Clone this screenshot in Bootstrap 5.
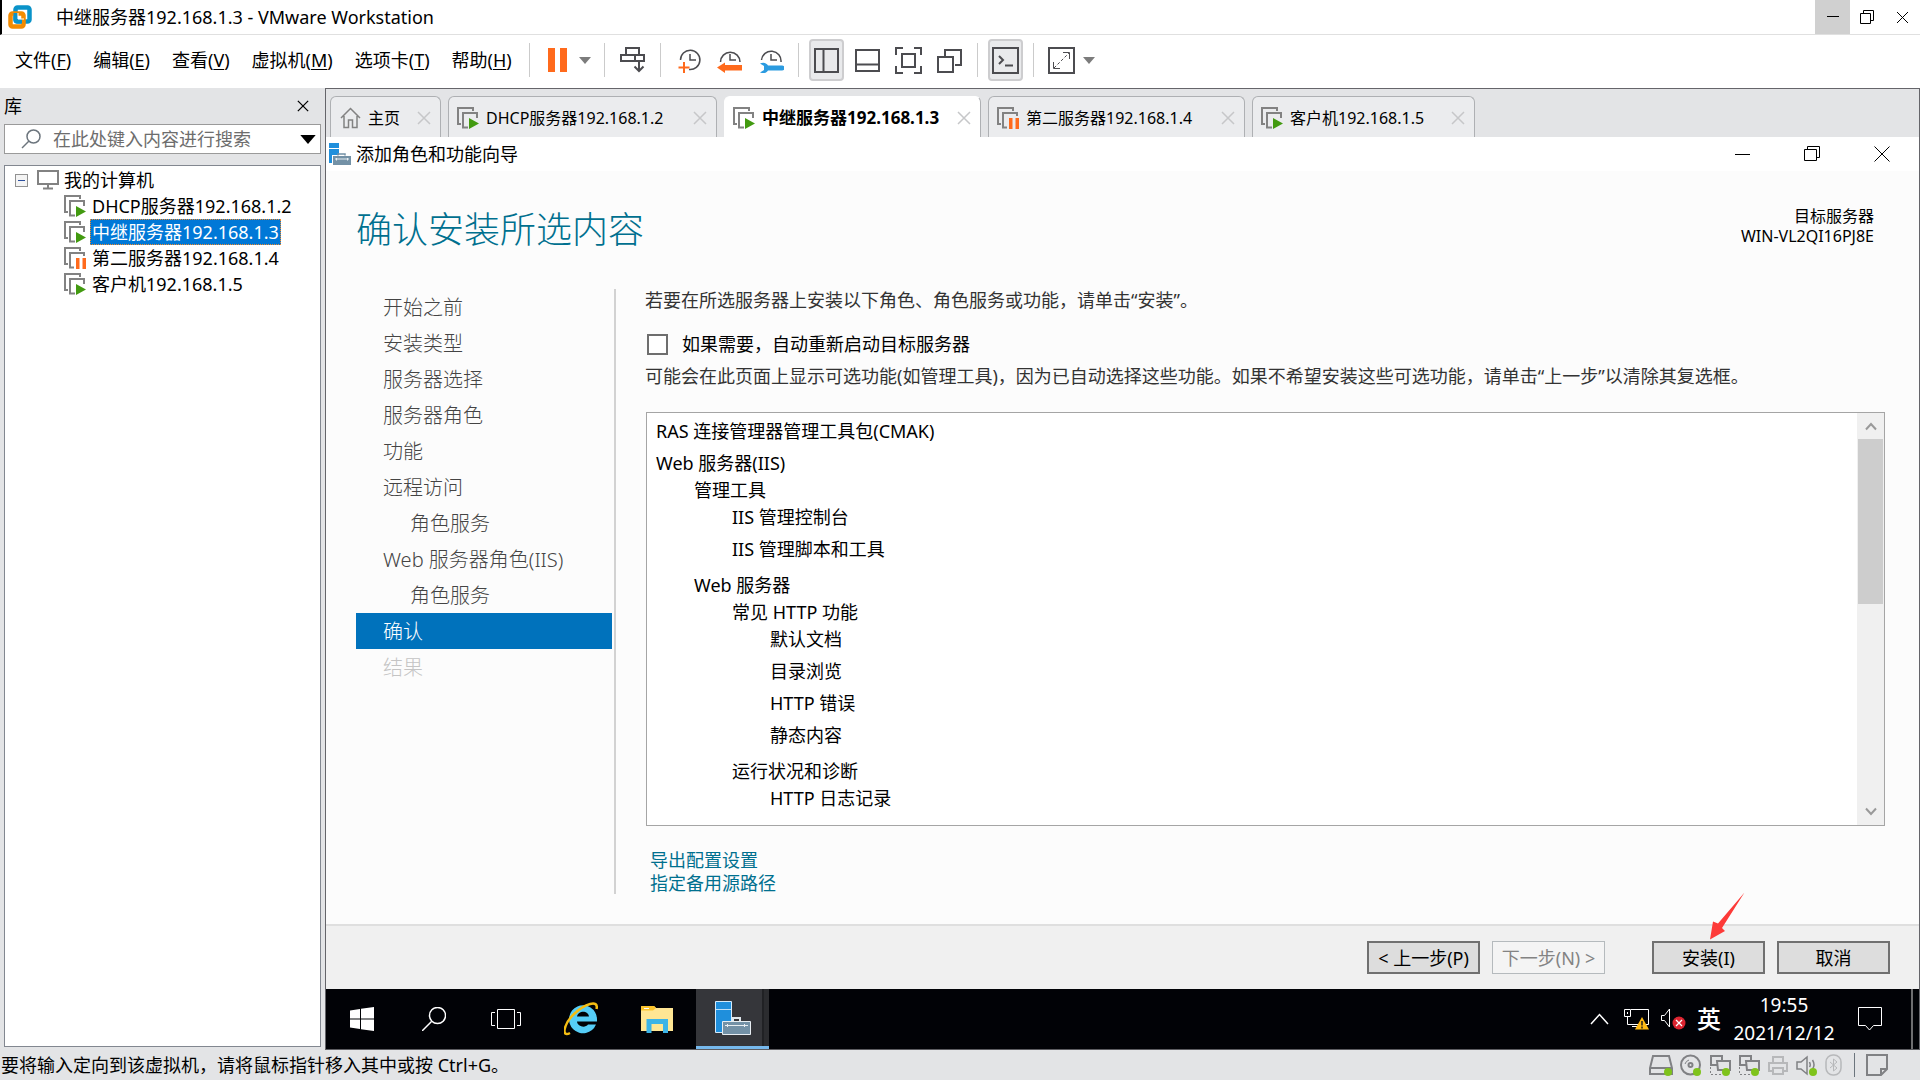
<!DOCTYPE html>
<html lang="zh-CN">
<head>
<meta charset="utf-8">
<meta name="viewport" content="width=device-width, initial-scale=1">
<title>中继服务器192.168.1.3 - VMware Workstation</title>
<link href="https://cdn.jsdelivr.net/npm/bootstrap@5.3.0/dist/css/bootstrap.min.css" rel="stylesheet">
<style>
  body { font-family: "Noto Sans", "Noto Sans CJK SC", sans-serif; font-size: 18px; line-height: 26px; color: #000; background: #e3e4e6; }
  button, input { font: inherit; color: inherit; }
  button { padding: 0; border: 0; background: transparent; }
  svg { display: block; flex: none; }
  .ln { fill: none; stroke: currentColor; stroke-width: 2; }
  .hair { fill: none; stroke: currentColor; stroke-width: 1; }
  .fine { stroke-width: 1.5; }

  .app-title { height: 35px; background: #fff; border-bottom: 1px solid #e0e0e0; border-left: 2px solid #000; }
  .win-btn { width: 35px; }
  .win-btn.hovered { background: #d0d0d0; }

  .app-bar { height: 53px; padding-bottom: 3px; background: #fff; }
  .menu-link { color: #000; text-decoration: none; }
  .menu-link u { text-underline-offset: 2px; }
  .menus { gap: 22px; width: 513px; padding-left: 15px; }
  .tools { gap: 6px; color: #4c4c50; }
  .tool-sep { width: 1px; height: 34px; margin: 0 4px; background: #cbcbcb; }
  .tool { width: 35px; height: 42px; display: flex; align-items: center; justify-content: center; border-radius: 4px; }
  .tool.pressed { background: #e9eaec; border: 2px solid #cdcdcf; }
  .tool-caret { width: 19px; color: #7c7c7c; display: flex; justify-content: center; }

  .library { width: 325px; flex: none; padding: 0 4px 3px; }
  .lib-head { height: 36px; }
  .search-box { height: 30px; background: #fff; border: 1px solid #9a9a9a; }
  .search-box input { border: 0; outline: 0; background: none; min-width: 0; }
  .search-box input::placeholder { color: #6d6d6d; opacity: 1; }
  .tree { margin-top: 11px; padding: 1px 0 0 10px; background: #fff; border: 1px solid #828790; }
  .tree-row { height: 26px; }
  .tree-kids { padding-left: 49px; }
  .tree-name { line-height: 24px; padding: 0 1px; border: 1px solid transparent; }
  .tree-name.chosen { background: #0078d7; color: #fff; border: 1px dotted #f28b2a; }
  .expander { width: 13px; height: 13px; border: 1px solid #919191; background: #f4f4f4; }
  .vm-ico { color: #828282; }

  .stage { border: 1px solid #65656a; border-bottom-color: #5c5c60; }
  .tabs { height: 48px; gap: 7px; padding: 7px 4px 0; background: #e3e4e6; }
  .vm-tab { display: flex; align-items: center; gap: 7px; background: #ebecee; border: 1px solid #aeb0b3; border-bottom: 0; border-radius: 6px 6px 0 0; font-size: 16px; padding: 1px 9px 0 8px; color: #000; }
  .vm-tab.current { background: #fff; border-left-color: #fff; border-top-color: #fff; font-size: 17px; font-weight: 700; }
  .tab-s { width: 111px; } .tab-m { width: 223px; } .tab-l { width: 257px; } .tab-xl { width: 269px; }
  .shut { color: #c6c7c9; }

  .wiz-title { height: 34px; background: #fff; padding-right: 2px; }
  .wiz-ctl { width: 70px; display: flex; justify-content: center; }
  .wizard { background: #fcfcfc; }
  .wiz-head { height: 118px; padding: 0 45px 0 30px; }
  .wiz-head h1 { margin: 35px 0 0; font-size: 36px; line-height: 42px; font-weight: 300; color: #00708f; font-family: "Noto Sans CJK SC Light", "Noto Sans CJK SC", sans-serif; }
  .target { margin-top: 35px; font-size: 16px; line-height: 20px; text-align: right; }
  .steps { width: 260px; flex: none; margin: 0 0 30px 30px; padding: 0 2px 0 0; border-right: 2px solid #d2d2d2; }
  .step { display: block; height: 36px; line-height: 38px; padding-left: 27px; font-size: 20px; font-weight: 300; color: #444; text-decoration: none; }
  .step.sub { padding-left: 54px; }
  .step.now { background: #0072bc; color: #fff; }
  .step.off { color: #c4c4c4; }
  .pane { padding: 0 34px 0 29px; color: #333; }
  .intro { line-height: 22px; }
  .restart { gap: 14px; margin: 20px 0 6px; color: #000; }
  .restart input { appearance: none; width: 21px; height: 21px; margin: 0 0 0 2px; border: 2px solid #6e6e6e; background: #fff; }
  .role-box { margin: 23px 0 23px 1px; height: 414px; background: #fff; border: 1px solid #a5a5a5; color: #000; }
  .role-list { padding: 5px 0 0 9px; line-height: 27px; }
  .role-list ul { list-style: none; margin: 0 0 4px; padding: 0 0 0 38px; }
  .role-list > ul { padding: 0; }
  .leaf { padding-bottom: 5px; }
  .scroller { width: 27px; background: #f0f0f0; color: #999; border: 1px solid #f0f0f0; }
  .scroller button { height: 25px; display: flex; align-items: center; justify-content: center; }
  .thumb { height: 165px; background: #cdcdcd; }
  .links { padding-left: 5px; }
  .wiz-link { color: #00708f; text-decoration: none; line-height: 23px; }
  .wiz-foot { height: 65px; background: #f0f0f0; border-top: 2px solid #dfdfdf; padding-right: 29px; gap: 12px; }
  .wbtn { width: 113px; height: 33px; line-height: 28px; white-space: nowrap; background: #ddd; border: 2px solid #707070; }
  .wbtn:disabled { background: #f4f4f4; border: 1px solid #b5babd; color: #838383; }
  .commit { margin-left: 35px; }
  .pointer-arrow { position: absolute; left: 57px; top: -49px; }

  .taskbar { height: 60px; background: #010206; color: #fff; }
  .task { width: 72px; display: flex; align-items: center; justify-content: center; }
  .task.pinned { width: 77px; }
  .task.open { width: 73px; background: linear-gradient(90deg, #35363a 66px, #202124 66px, #202124 68px, #2b2c2f 68px); border-bottom: 3px solid #76b9ed; }
  .clock { font-size: 19px; line-height: 28px; width: 104px; }
  .ime { font-size: 24px; line-height: 30px; font-weight: 500; }
  .peek { width: 8px; border-left: 2px solid #6e6e70; }
  .tray { gap: 11px; }

  .status { height: 30px; padding-left: 1px; color: #000; }
  .devices { gap: 7px; color: #808184; padding-right: 32px; }
  .dim { color: #b7b8ba; }
</style>
</head>
<body class="d-flex flex-column vh-100 overflow-hidden">

<svg width="0" height="0" class="position-absolute" aria-hidden="true">
  <symbol id="vm-run" viewBox="0 0 22 22">
    <path d="M4 17H1V1h15v3" fill="none" stroke="#828282" stroke-width="2"/>
    <path d="M11 20.500H6V6h14v5" fill="none" stroke="#828282" stroke-width="2"/>
    <path d="M12 11l10 5.500L12 22z" fill="#429a10"/>
  </symbol>
  <symbol id="vm-hold" viewBox="0 0 22 22">
    <path d="M4 17H1V1h15v3" fill="none" stroke="#828282" stroke-width="2"/>
    <path d="M10 20.500H6V6h14v3" fill="none" stroke="#828282" stroke-width="2"/>
    <path d="M12 11h3.500v11H12zM18.500 11H22v11h-3.500z" fill="#ff6a1c"/>
  </symbol>
  <symbol id="cross" viewBox="0 0 14 14"><path d="M1 1l12 12M13 1L1 13" fill="none" stroke="currentColor" stroke-width="1.500"/></symbol>
  <symbol id="srv-mgr" viewBox="0 0 36 34">
    <path d="M.5.500h16v31H.500z" fill="#1f8fdc" stroke="#d5ebfa"/><path d="M1 8.500h15" stroke="#bfe0f7"/>
    <path d="M18 20v-3h7v3" fill="none" stroke="#dfe7ec" stroke-width="2"/>
    <path d="M7.500 20.500h28v13h-28z" fill="#7391a6" stroke="#e8eef2"/>
    <path d="M10 24.500h23M12.500 23v3M29.500 23v3" stroke="#e8eef2" fill="none"/>
  </symbol>
  <symbol id="down" viewBox="0 0 12 7"><path d="M0 0h12L6 7z" fill="currentColor"/></symbol>
</svg>

<header class="app-title d-flex align-items-center">
  <svg class="ms-1 me-4" width="26" height="24" viewBox="-2 0 26 24"><rect x="7.500" y="2.500" width="14" height="14" rx="2" fill="none" stroke="#0a93c9" stroke-width="4.500"/><rect x="2.500" y="8.500" width="13" height="13" rx="2" fill="none" stroke="#f38b00" stroke-width="4.500"/><path d="M7.500 8v7a1.500 1.500 0 0 0 1.500 1.500h5" fill="none" stroke="#0a93c9" stroke-width="4"/><path d="M10 8v6h6" fill="none" stroke="#fff"/></svg>
  <span class="me-auto">中继服务器192.168.1.3 - VMware Workstation</span>
  <div class="d-flex align-self-stretch">
    <button class="win-btn hovered d-flex align-items-center justify-content-center" aria-label="最小化"><svg width="12" height="12"><path d="M0 5.500h12" class="hair"/></svg></button>
    <button class="win-btn d-flex align-items-center justify-content-center" aria-label="还原"><svg width="15" height="15"><path d="M3.500 3.500v-3h10v10h-3M.5 3.500h10v10H.5z" class="hair"/></svg></button>
    <button class="win-btn d-flex align-items-center justify-content-center" aria-label="关闭"><svg width="13" height="13"><path d="M1 1l11 11M12 1L1 12" class="hair"/></svg></button>
  </div>
</header>

<div class="app-bar d-flex align-items-center">
  <nav class="menus d-flex text-nowrap">
    <a class="menu-link" href="#">文件(<u>F</u>)</a>
    <a class="menu-link" href="#">编辑(<u>E</u>)</a>
    <a class="menu-link" href="#">查看(<u>V</u>)</a>
    <a class="menu-link" href="#">虚拟机(<u>M</u>)</a>
    <a class="menu-link" href="#">选项卡(<u>T</u>)</a>
    <a class="menu-link" href="#">帮助(<u>H</u>)</a>
  </nav>
  <div class="tools d-flex align-items-center ms-2">
    <span class="tool-sep ms-2"></span>
    <div class="d-flex align-items-center">
      <button class="tool" aria-label="挂起"><svg width="19" height="24"><path d="M0 0h7v24H0zM12 0h7v24h-7z" fill="#ff6a1c"/></svg></button>
      <button class="tool-caret" aria-label="电源选项"><svg width="12" height="7"><use href="#down"/></svg></button>
    </div>
    <span class="tool-sep"></span>
    <button class="tool" aria-label="发送 Ctrl+Alt+Del"><svg width="26" height="26" viewBox="0 0 26 26"><path class="ln" d="M6 1h13v7H6zM1 8h14v6H1zM15 8h9v6h-9z"/><path class="ln" d="M19 14v10M14.500 19.500l4.500 4.500 4.500-4.500" /></svg></button>
    <span class="tool-sep"></span>
    <button class="tool" aria-label="拍摄快照"><svg width="26" height="26" viewBox="0 0 26 26"><path class="ln fine" d="M4.500 13A9.700 9.700 0 1 1 13 22.500M14 7v6h6"/><path d="M8 15v11M2.500 20.500h11" stroke="#ff6a1c" stroke-width="2"/></svg></button>
    <button class="tool" aria-label="恢复快照"><svg width="26" height="26" viewBox="0 0 26 26"><path class="ln fine" d="M3.500 15a9.700 9.700 0 1 1 19.500 0M13 7v6h6"/><path d="M0 20.500l8-5v2.500h17v5.500H8v2.500z" fill="#ff6a1c"/></svg></button>
    <button class="tool" aria-label="管理快照"><svg width="26" height="26" viewBox="0 0 26 26"><path class="ln fine" d="M3.500 13a9.700 9.700 0 1 1 19.500 2M13 7v6h6"/><path d="M2 16.500c4-2 7 0 8 2h14a2 2 0 0 1 0 5H10c-1 2-4 3.500-8 2l4-2.500v-4z" fill="#2b9be0"/></svg></button>
    <span class="tool-sep"></span>
    <button class="tool pressed" aria-label="显示库"><svg width="25" height="25"><path class="ln" d="M1 1h23v23H1zM9.500 1v23"/></svg></button>
    <button class="tool" aria-label="缩略图栏"><svg width="25" height="25"><path class="ln" d="M1 2h23v21H1zM1 16.500h23"/></svg></button>
    <button class="tool" aria-label="全屏"><svg width="27" height="27"><path class="ln" d="M1 8V1h7M19 1h7v7M26 19v7h-7M8 26H1v-7M7 7h13v13H7z"/></svg></button>
    <button class="tool" aria-label="Unity"><svg width="25" height="25"><path class="ln" d="M8 8V2h16v15h-6M1 9h15v15H1z"/></svg></button>
    <span class="tool-sep"></span>
    <button class="tool pressed" aria-label="控制台"><svg width="27" height="27"><path class="ln" d="M1 1h25v25H1zM7 9l4 4-4 4M13 18.500h8"/></svg></button>
    <span class="tool-sep"></span>
    <div class="d-flex align-items-center">
      <button class="tool" aria-label="拉伸"><svg width="27" height="27"><path class="ln" d="M1 1h25v25H1z"/><path class="hair" d="M15 5.500h6.500V12M5.500 15v6.500H12"/><path class="hair" stroke-dasharray="3 2" d="M6 21L21 6"/></svg></button>
      <button class="tool-caret" aria-label="拉伸选项"><svg width="12" height="7"><use href="#down"/></svg></button>
    </div>
  </div>
</div>

<div class="d-flex flex-grow-1" style="min-height:0">
  <aside class="library d-flex flex-column">
    <div class="lib-head d-flex align-items-center justify-content-between">
      <span>库</span>
      <button class="me-2" aria-label="关闭库"><svg class="me-1" width="12" height="12"><use href="#cross"/></svg></button>
    </div>
    <div class="search-box d-flex align-items-center">
      <svg class="ms-3 me-2 text-secondary" width="20" height="20"><circle cx="12.500" cy="7.500" r="6.500" class="ln fine"/><path class="ln fine" d="M8 12l-7 7"/></svg>
      <input class="flex-grow-1 ps-1" type="text" placeholder="在此处键入内容进行搜索" aria-label="搜索库">
      <button class="px-1" aria-label="搜索选项"><svg width="16" height="9"><use href="#down"/></svg></button>
    </div>
    <div class="tree flex-grow-1">
      <div class="tree-row d-flex align-items-center">
        <button class="expander me-2" aria-label="折叠"><svg width="11" height="11"><path d="M2 5.500h7" stroke="#2c4f9e"/></svg></button>
        <svg class="vm-ico me-1" width="24" height="20"><path class="ln" d="M2 1h20v13H2zM12 14v4M7 18.500h10"/></svg>
        <span>我的计算机</span>
      </div>
      <div class="tree-kids">
        <div class="tree-row d-flex align-items-center"><svg class="me-1" width="22" height="22"><use href="#vm-run"/></svg><span class="tree-name">DHCP服务器192.168.1.2</span></div>
        <div class="tree-row d-flex align-items-center"><svg class="me-1" width="22" height="22"><use href="#vm-run"/></svg><span class="tree-name chosen">中继服务器192.168.1.3</span></div>
        <div class="tree-row d-flex align-items-center"><svg class="me-1" width="22" height="22"><use href="#vm-hold"/></svg><span class="tree-name">第二服务器192.168.1.4</span></div>
        <div class="tree-row d-flex align-items-center"><svg class="me-1" width="22" height="22"><use href="#vm-run"/></svg><span class="tree-name">客户机192.168.1.5</span></div>
      </div>
    </div>
  </aside>

  <main class="stage flex-grow-1 d-flex flex-column" style="min-width:0">
    <div class="tabs d-flex">
      <div class="vm-tab tab-s"><svg class="vm-ico" width="22" height="22"><path class="ln fine" d="M2 11l9.500-9.500L21 11M5 9v11.500h4.500V13h4v7.500H18V9"/></svg>主页<button class="shut ms-auto" aria-label="关闭标签"><svg width="14" height="14"><use href="#cross"/></svg></button></div>
      <div class="vm-tab tab-xl"><svg width="22" height="22"><use href="#vm-run"/></svg>DHCP服务器192.168.1.2<button class="shut ms-auto" aria-label="关闭标签"><svg width="14" height="14"><use href="#cross"/></svg></button></div>
      <div class="vm-tab tab-l current"><svg width="22" height="22"><use href="#vm-run"/></svg>中继服务器192.168.1.3<button class="shut ms-auto" aria-label="关闭标签"><svg width="14" height="14"><use href="#cross"/></svg></button></div>
      <div class="vm-tab tab-l"><svg width="22" height="22"><use href="#vm-hold"/></svg>第二服务器192.168.1.4<button class="shut ms-auto" aria-label="关闭标签"><svg width="14" height="14"><use href="#cross"/></svg></button></div>
      <div class="vm-tab tab-m"><svg width="22" height="22"><use href="#vm-run"/></svg>客户机192.168.1.5<button class="shut ms-auto" aria-label="关闭标签"><svg width="14" height="14"><use href="#cross"/></svg></button></div>
    </div>

    <div class="wiz-title d-flex align-items-center">
      <svg class="me-1" width="26" height="22" viewBox="-3 0 26 22"><path d="M0 0h10v5H0zM0 6h10v14H0z" fill="#1f8fdc"/><path d="M3 12h19v10H3z" fill="#fff"/><path d="M9 12.500v-1.500h7v1.500" fill="none" stroke="#7391a6" stroke-width="1.500"/><path d="M4 13h18v9H4z" fill="#7391a6"/><path d="M6 16h14M7.500 15v2.500M18.500 15v2.500" stroke="#e8eef2"/></svg>
      <span class="me-auto">添加角色和功能向导</span>
      <button class="wiz-ctl" aria-label="最小化"><svg width="15" height="15"><path d="M0 7.500h15" class="hair"/></svg></button>
      <button class="wiz-ctl" aria-label="还原"><svg width="16" height="16"><path d="M3.500 3.500v-3h12v11h-3M.5 3.500h12v11H.500z" class="hair"/></svg></button>
      <button class="wiz-ctl" aria-label="关闭"><svg width="16" height="16"><path d="M.500.500l15 15M15.500.500l-15 15" class="hair"/></svg></button>
    </div>

    <section class="wizard flex-grow-1 d-flex flex-column" style="min-height:0">
      <div class="wiz-head d-flex justify-content-between">
        <h1>确认安装所选内容</h1>
        <div class="target">目标服务器<br>WIN-VL2QI16PJ8E</div>
      </div>
      <div class="d-flex flex-grow-1" style="min-height:0">
        <nav class="steps">
          <a class="step" href="#">开始之前</a>
          <a class="step" href="#">安装类型</a>
          <a class="step" href="#">服务器选择</a>
          <a class="step" href="#">服务器角色</a>
          <a class="step" href="#">功能</a>
          <a class="step" href="#">远程访问</a>
          <a class="step sub" href="#">角色服务</a>
          <a class="step" href="#">Web 服务器角色(IIS)</a>
          <a class="step sub" href="#">角色服务</a>
          <a class="step now" href="#" aria-current="step">确认</a>
          <a class="step off" aria-disabled="true">结果</a>
        </nav>
        <div class="pane flex-grow-1">
          <div class="intro">若要在所选服务器上安装以下角色、角色服务或功能，请单击“安装”。</div>
          <div class="restart d-flex align-items-center">
            <input type="checkbox" id="restart"><label for="restart">如果需要，自动重新启动目标服务器</label>
          </div>
          <div>可能会在此页面上显示可选功能(如管理工具)，因为已自动选择这些功能。如果不希望安装这些可选功能，请单击“上一步”以清除其复选框。</div>
          <div class="role-box d-flex">
            <div class="role-list flex-grow-1 overflow-hidden">
              <ul>
                <li class="leaf">RAS 连接管理器管理工具包(CMAK)</li>
                <li>Web 服务器(IIS)
                  <ul>
                    <li>管理工具
                      <ul><li class="leaf">IIS 管理控制台</li><li class="leaf">IIS 管理脚本和工具</li></ul>
                    </li>
                    <li>Web 服务器
                      <ul>
                        <li>常见 HTTP 功能
                          <ul><li class="leaf">默认文档</li><li class="leaf">目录浏览</li><li class="leaf">HTTP 错误</li><li class="leaf">静态内容</li></ul>
                        </li>
                        <li>运行状况和诊断
                          <ul><li class="leaf">HTTP 日志记录</li></ul>
                        </li>
                      </ul>
                    </li>
                  </ul>
                </li>
              </ul>
            </div>
            <div class="scroller d-flex flex-column">
              <button aria-label="向上滚动"><svg width="12" height="9"><path class="ln" d="M1 7.500l5-5.500 5 5.500"/></svg></button>
              <div class="thumb"></div>
              <button class="mt-auto" aria-label="向下滚动"><svg width="12" height="9"><path class="ln" d="M1 1.500L6 7l5-5.500"/></svg></button>
            </div>
          </div>
          <div class="links d-flex flex-column align-items-start">
            <a class="wiz-link" href="#">导出配置设置</a>
            <a class="wiz-link" href="#">指定备用源路径</a>
          </div>
        </div>
      </div>
      <div class="wiz-foot d-flex align-items-center justify-content-end">
        <button class="wbtn">&lt; 上一步(P)</button>
        <button class="wbtn" disabled>下一步(N) &gt;</button>
        <div class="commit position-relative">
          <svg class="pointer-arrow" width="38" height="48" viewBox="0 0 38 48"><path d="M35.500.500L9 31.500l-5-2L1 47.500 16 39l-3-3z" fill="#fd3a38"/></svg>
          <button class="wbtn">安装(I)</button>
        </div>
        <button class="wbtn">取消</button>
      </div>
    </section>

    <div class="taskbar d-flex">
      <button class="task" aria-label="开始"><svg width="24" height="24"><path d="M0 3.500l10-1.500v9.500H0zM11 1.800L24 0v11.500H11zM0 12.500h10V22L0 20.500zM11 12.500h13V24l-13-1.800z" fill="#fff"/></svg></button>
      <button class="task" aria-label="搜索"><svg width="24" height="24"><circle cx="15.500" cy="8.500" r="8" class="ln fine"/><path class="ln fine" d="M9.500 14.500L0 24"/></svg></button>
      <button class="task" aria-label="任务视图"><svg width="30" height="20"><path class="hair" d="M6.500.500h17v19h-17zM4 3.500H.500v13H4M26 3.500h3.500v13H26"/></svg></button>
      <button class="task pinned" aria-label="Internet Explorer"><svg width="34" height="34" viewBox="0 0 34 34"><path d="M32 22.500A14 14 0 1 1 33 17v2.500H13c.5 5 8 7 11 3zM13 14.500h12c-.5-6.500-11-6.500-12 0z" fill="#55cdf7" fill-rule="evenodd"/><path d="M6 31C-3 36-.500 22 10 12S35-3 32.500 7" fill="none" stroke="#f4bd12" stroke-width="2.500"/></svg></button>
      <button class="task pinned" aria-label="文件资源管理器"><svg width="33" height="27" viewBox="0 0 33 27"><path d="M0 1a1 1 0 0 1 1-1h12l2 2h17v23H0z" fill="#ffe694"/><path d="M0 1a1 1 0 0 1 1-1h12l2 2-3 2.500H0z" fill="#fdc52c"/><path d="M3 2.500h5" stroke="#fff"/><path d="M5.500 27V13H27v14h-5v-9H10.500v9z" fill="#3cb4e7"/></svg></button>
      <button class="task open" aria-label="服务器管理器"><svg width="36" height="34"><use href="#srv-mgr"/></svg></button>
      <div class="tray d-flex align-items-center ms-auto">
        <button aria-label="显示隐藏的图标"><svg width="19" height="12"><path class="hair fine" d="M1 11l8.500-9.500L18 11"/></svg></button>
        <svg class="ms-1" width="26" height="22"><path class="hair" d="M7 1.500h17.500v15H3.500V8M8 18.500h9M.500 1.500h6v7h-6zM3.500 4v2"/><path d="M18 9l7 12.500H11z" fill="#fdb913"/><path d="M18 13v4.500M18 18.500v2" stroke="#222" stroke-width="1.500"/></svg>
        <svg width="25" height="22"><path class="hair" d="M.500 7.500h3L8.500 1v18l-5-6.500h-3z"/><circle cx="18" cy="15" r="6.500" fill="#dc2430"/><path d="M15 12l6 6M21 12l-6 6" stroke="#fff" stroke-width="1.300"/></svg>
        <span class="ime">英</span>
        <div class="clock text-center">19:55<br>2021/12/12</div>
        <button class="ms-2 me-3" aria-label="通知"><svg width="29" height="25"><path class="hair" d="M3.500.500h23v18h-8l-4 4.500-4-4.500h-7z"/></svg></button>
        <span class="peek align-self-stretch"></span>
      </div>
    </div>
  </main>
</div>

<footer class="status d-flex align-items-center justify-content-between">
  <span>要将输入定向到该虚拟机，请将鼠标指针移入其中或按 Ctrl+G。</span>
  <div class="devices d-flex align-items-center">
    <svg width="24" height="22"><path class="ln" d="M4 2h16l3 12v6H1v-6zM1 14h22"/><circle cx="19" cy="18" r="4" fill="#7fc31c"/></svg>
    <svg width="22" height="22"><circle cx="10.500" cy="11" r="9.500" class="ln"/><circle cx="10.500" cy="11" r="2" class="ln"/><path class="hair" d="M5 10a6 6 0 0 1 4-4"/><circle cx="17" cy="18" r="4" fill="#7fc31c"/></svg>
    <svg width="22" height="22"><path class="ln" d="M8 11H2V2h11v4M8 7h13v9H9z"/><path class="hair" stroke-dasharray="2 2" d="M1.500 13v7.500H14"/><circle cx="17" cy="18" r="4" fill="#7fc31c"/></svg>
    <svg width="22" height="22"><path class="ln" d="M8 11H2V2h11v4M8 7h13v9H9z"/><path class="hair" stroke-dasharray="2 2" d="M1.500 13v7.500H14"/><circle cx="17" cy="18" r="4" fill="#7fc31c"/></svg>
    <svg class="dim" width="22" height="22"><path class="ln" d="M6 9V3h10v6M6 17H2V9h18v8h-4M6 14h10v6H6z"/></svg>
    <svg width="22" height="22"><path class="ln fine" d="M1 8h4l6-5v17l-6-5H1zM13.500 8q1.500 3 0 5M16.500 6q3 5 0 9"/><circle cx="17" cy="18" r="4" fill="#7fc31c"/></svg>
    <svg class="dim" width="18" height="22"><rect x="1" y="1" width="15" height="20" rx="7" class="ln fine"/><path class="hair" d="M5 8l7 6-3.500 3V5L12 8l-7 6"/></svg>
    <span class="tool-sep bg-white border-start border-secondary" style="height:24px"></span>
    <svg width="22" height="22"><path class="ln" d="M1 1h20v14l-6 6H1zM21 15h-6v6"/></svg>
  </div>
</footer>

<script src="https://cdn.jsdelivr.net/npm/bootstrap@5.3.0/dist/js/bootstrap.bundle.min.js"></script>
</body>
</html>
